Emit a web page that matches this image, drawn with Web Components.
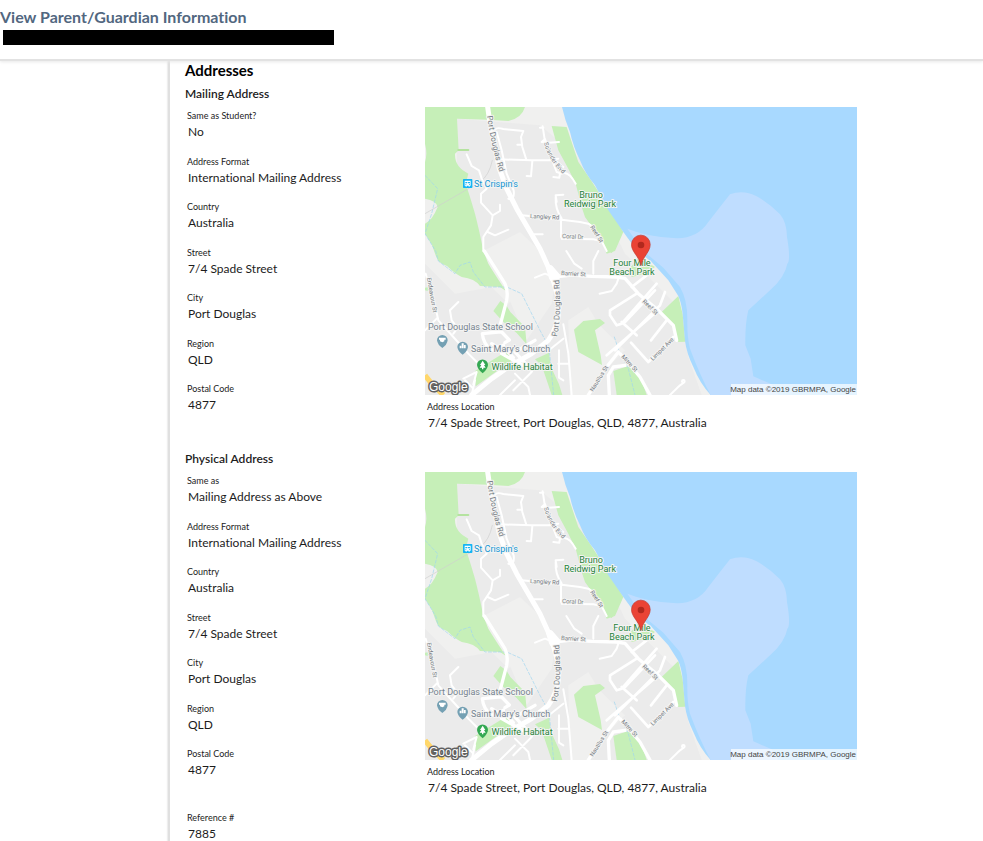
<!DOCTYPE html>
<html lang="en">
<head>
<meta charset="utf-8">
<title>View Parent/Guardian Information</title>
<style>
  html, body { margin: 0; background: #fff; }
  body { font-family: Lato, "Open Sans", sans-serif; font-variant-ligatures: none; color: #1c1c1c; }
</style>
</head>
<body>
<guardian-page></guardian-page>

<template id="map-template">
  <style>
    :host { display: block; }
    svg { display: block; width: 100%; height: auto; }
    text { font-family: Roboto, sans-serif; font-size: 9px; fill: #74838f; paint-order: stroke; stroke: #f4f4f3; stroke-width: 2px; stroke-linejoin: round; }
    .small { font-size: 6px; fill: #737980; }
    .road { font-size: 8px; fill: #737980; }
    .park { fill: #26833a; text-anchor: middle; }
    .bus { fill: #1296d3; }
    .brand { font-family: "Liberation Sans", sans-serif; font-size: 12px; fill: #fff; stroke: #606060; stroke-width: 3px; }
    .credit { font-family: "Liberation Sans", sans-serif; font-size: 8px; fill: #444; stroke: none; text-anchor: end; }
  </style>
  <svg viewBox="0 0 432 288" role="img" aria-label="Map of Port Douglas">
    <g transform="scale(.33333)" fill="none" stroke-linecap="round" stroke-linejoin="round">
      <rect width="1296" height="864" fill="#f0f0ef"/>
      <path fill="#ebebeb" d="M96 35L345 55 460 150 600 440 760 600 790 750 830 864H0V470L90 560 200 540 250 590 305 530 210 440 175 432 96 200z"/>
      <path fill="#f0f0ef" d="M175 432L285 375 345 432 390 520 380 590 305 700 250 570 200 440z"/>
      <path fill="#f0f0ef" d="M430 640L490 600 520 650 600 730 540 790 490 864H435z"/>
      <!-- parkland -->
      <g fill="#c6efb8">
        <path d="M0 0H300Q290 34 250 42L190 38 96 35 101 130 90 140Q88 180 130 200L122 230 135 270 150 320Q163 370 175 432L190 470Q208 500 235 540L243 552 225 540 165 537Q150 515 110 510 90 500 66 477 40 470 33 448L20 412 0 380V350Q22 340 38 300 34 280 0 275V165Q8 140 0 110z"/>
        <path d="M205 612L226 582 245 596 256 615 300 660 305 712 275 678 232 642z"/>
        <path d="M150 792L240 736 267 756 152 838z"/>
        <path d="M330 757L372 737 378 780 402 832 412 864H380L350 775z"/>
        <path d="M0 542L12 540 8 552 0 550z"/>
        <path d="M380 57L425 60 445 120 460 165 495 215 550 300 595 375 570 432 545 440 530 400 480 330 470 300 452 230 430 185 400 130z"/>
        <path d="M613 485L650 442 665 465 690 480 660 500 620 510z"/>
        <path d="M548 432H565L560 438z"/>
        <path d="M710 615L760 567 773 622 781 704 760 705 750 680 735 645z"/>
        <path d="M447 668L475 642 525 636 540 648 510 670 527 744 531 774 460 735z"/>
        <path d="M565 792L600 780 622 778 650 820 665 864H575z"/>
      </g>
      <!-- sea -->
      <path fill="#a8d9ff" d="M411 0Q420 40 435 75 445 120 465 160 480 200 510 235L550 310 595 375 635 430 680 465 730 520 760 567Q770 590 773 622L780 702Q785 740 805 780 825 830 857 864H1296V0z"/>
      <path fill="#bfddff" d="M607 365Q670 390 745 393 815 398 850 345L885 300 915 262Q955 247 995 268 1035 290 1065 322 1085 345 1086 390 1098 460 1087 470 1080 510 1035 550L970 610Q960 650 961 715L977 755 985 808 1040 832 1060 864H857Q825 805 795 725 786 690 787 640 788 580 765 540L715 482 655 432z"/>
      <!-- creeks and boundary -->
      <g stroke="#9fd4f0" stroke-width="2" stroke-dasharray="9 6">
        <path d="M0 205L38 245 20 320 0 380 32 432 40 462 90 500 105 475 135 465 145 495 180 540 245 540 290 560 310 600 345 670 372 720 386 864"/>
        <path d="M568 690L583 735 610 785 630 864"/>
      </g>
      <path stroke="#cfcfcf" stroke-width="2" d="M0 320L165 225Q193 205 202 160"/>
      <!-- streets -->
      <g stroke="#fff" stroke-width="6">
        <path d="M210 68Q215 60 235 66L295 72 288 90 292 120 303 155M277 113H291M223 157L318 160 390 160 415 180M322 162L318 208 305 207M353 58L360 104 350 105 360 96 378 150 395 195 405 198 403 212 385 210M410 200Q430 190 452 230M355 62L345 62M402 105L360 108M400 155L370 160"/>
        <path d="M215 75L230 130 245 200 266 250Q270 280 250 275M125 142L140 177 162 190 170 215 185 245 168 260 168 287 203 325 198 355 175 390 175 432M203 325L225 312 225 293M188 375L210 385 250 368"/>
        <path d="M290 325L345 330 410 338 465 345 490 350 505 360M328 382H353M408 335V390M395 285L392 265 415 263M392 270Q390 305 410 335M410 395L505 397 530 402 545 432"/>
        <path stroke="#b5e3a0" d="M100 129H130"/>
        <path stroke-width="10" d="M178 432L215 490 240 530Q250 550 245 580L220 675 230 675 253 699 240 707M220 675L172 680Q175 712 200 730L235 715M265 752L245 730M230 740L320 790 270 735 330 700M240 735L200 710"/>
        <path d="M2 500L18 560 30 595 40 640 85 690 130 740 155 765M100 585L75 610 80 640 98 663 85 680M0 670L35 635M115 815L155 795 145 832"/>
        <path stroke-width="10" d="M385 510L440 504 500 508 575 510 600 514 640 560 700 610 745 655 755 700"/>
        <path d="M424 432L448 470 470 485M520 432L505 462 505 500M385 510L360 500 330 512M524 560L560 552 575 530 580 515"/>
        <path stroke-width="8" d="M635 560L555 610 555 625 575 655 590 650 695 530M590 645L635 685M570 730L705 595 720 555M545 745L700 610M678 700L725 640M618 707L670 765 745 690M600 645L690 550M620 540L665 505"/>
        <path stroke-width="10" d="M490 864L545 780 580 735M585 740L620 780 645 810 675 864M553 864L550 805 565 780 600 775"/>
        <path d="M402 730V812L415 820M400 770H430M415 652L430 740 440 864M365 735L415 695M735 864L765 835 775 828"/>
        <circle cx="775" cy="823" r="4"/>
        <path d="M270 800L310 840 315 864M150 820L140 864M120 820L145 845M265 850L320 795M270 820L225 864"/>
      </g>
      <g stroke="#fff" stroke-width="15">
        <path d="M188 0L193 35 210 120 223 185 245 245 275 305 345 425 372 485 382 510 400 575Q408 650 370 700L320 740 250 780 200 815 140 864"/>
      </g>
      <path stroke="#fff" stroke-width="22" d="M375 485L395 508 383 512z"/>
      <path stroke="#ffd76b" stroke-width="16" stroke-linecap="butt" d="M0 805L20 830 55 864"/>
      <!-- place symbols -->
      <rect x="114" y="216" width="28" height="27" rx="2" fill="#14b5f4"/>
      <path fill="#fff" d="M119 221H137V236H134V239H131V236H125V239H122V236H119z"/>
      <path fill="#14b5f4" d="M121 225H127V229H121zM129 225H135V229H129zM121 232H124V234H121zM132 232H135V234H132z"/>
      <g fill="#74a0b3">
        <path d="M52 723Q38 714 36 700A16 16 0 1 1 68 700Q66 714 52 723zM113 743Q99 734 97 720A16 16 0 1 1 129 720Q127 734 113 743z"/>
        <path fill="#34a853" d="M173 799Q158 788 156 774A16 16 0 1 1 189 774Q187 788 173 799z"/>
      </g>
      <path fill="#fff" d="M42 692H62V698H58V703L52 706 45 703V698H42zM104 716H109V724H104zM110 709H116V724H110zM117 714H122V724H117zM173 761L181 774H177L182 782H175V787H171V782H164L169 774H165z"/>
    </g>
    <defs>
      <path id="pd-north" d="M62 9Q66 38 76 70"/>
      <path id="pd-south" d="M132 230Q137 205 134 169"/>
      <path id="solander" d="M119 36Q125 57 142 70"/>
    </defs>
    <text class="road"><textPath href="#pd-north">Port Douglas Rd</textPath></text>
    <text class="road"><textPath href="#pd-south">Port Douglas Rd</textPath></text>
    <text class="small"><textPath href="#solander">Solander Blvd</textPath></text>
    <text class="small" x="105" y="111" transform="rotate(3 105 111)">Langley Rd</text>
    <text class="small" x="137" y="131" transform="rotate(3 137 131)">Coral Dr</text>
    <text class="small" x="165" y="120" transform="rotate(58 165 120)">Reef St</text>
    <text class="small" x="136" y="168" transform="rotate(3 136 168)">Barrier St</text>
    <text class="small" x="217" y="195" transform="rotate(44 217 195)">Reef St</text>
    <text class="small" x="228" y="254" transform="rotate(-45 228 254)">Limpet Ave</text>
    <text class="small" x="196" y="250" transform="rotate(47 196 250)">Mitre St</text>
    <text class="small" x="168" y="285" transform="rotate(-58 168 285)">Nautilus St</text>
    <text class="small" x="2" y="171" transform="rotate(80 2 171)">Endeavour St</text>
    <text class="bus" x="49" y="80">St Crispin's</text>
    <text class="park" x="166" y="91">Bruno</text>
    <text class="park" x="165" y="100">Reidwig Park</text>
    <text class="park" x="207" y="159">Four Mile</text>
    <text class="park" x="207" y="168">Beach Park</text>
    <text x="3" y="223">Port Douglas State School</text>
    <text x="46" y="245">Saint Mary's Church</text>
    <text class="park" x="97" y="263">Wildlife Habitat</text>
    <path fill="#ea4335" stroke="#c5372c" stroke-width=".7" d="M216 158.500C214 149 206.500 145 206.500 137.500A9.300 9.300 0 0 1 225.200 137.500C225.200 145 218 149 216 158.500z"/>
    <circle cx="216" cy="138" r="3.300" fill="#b1281d"/>
    <text class="brand" x="4" y="284">Google</text>
    <rect x="306" y="277" width="126" height="11" fill="#fff" opacity=".7"/>
    <text class="credit" x="431" y="285">Map data ©2019 GBRMPA, Google</text>
  </svg>
</template>

<script>
  function attach(host, html) {
    host.attachShadow({ mode: 'open' }).innerHTML = html;
  }

  customElements.define('page-banner', class extends HTMLElement {
    connectedCallback() {
      attach(this, `
        <style>
          :host { display: block; position: relative; background: #fff; border-bottom: 2px solid #e2e2e2; box-shadow: 0 1px 3px #e8e8e8; padding: 8px 0 14px; }
          h1 { margin: 0; font-size: 16px; line-height: 18px; font-weight: 700; color: #52677f; }
          .redacted { margin: 4px 0 0 3px; width: 331px; max-width: 100%; height: 15px; background: #000; }
        </style>
        <h1><slot></slot></h1>
        <div class="redacted"></div>`);
    }
  });

  customElements.define('info-field', class extends HTMLElement {
    connectedCallback() {
      attach(this, `
        <style>
          :host { display: block; }
          .label { font-size: 9px; line-height: 12px; padding-left: 2px; }
          .value { font-size: 12px; line-height: 16px; margin-top: 2px; padding-left: 3px; }
        </style>
        <div class="label">${this.getAttribute('label')}</div>
        <div class="value"><slot></slot></div>`);
    }
  });

  customElements.define('area-map', class extends HTMLElement {
    connectedCallback() {
      this.attachShadow({ mode: 'open' })
        .append(document.getElementById('map-template').content.cloneNode(true));
    }
  });

  customElements.define('address-section', class extends HTMLElement {
    connectedCallback() {
      attach(this, `
        <style>
          :host { display: block; }
          h3 { margin: 0; font-size: 12px; line-height: 16px; font-weight: 600; }
          .columns { display: grid; grid-template-columns: 240px minmax(0, 432px); margin-top: 5px; }
          .fields { display: flex; flex-direction: column; justify-content: space-between; padding: 3px 0 18px; }
          area-map { margin-bottom: 6px; }
        </style>
        <h3>${this.getAttribute('heading')}</h3>
        <div class="columns">
          <div class="fields"><slot></slot></div>
          <div class="place">
            <area-map></area-map>
            <info-field label="Address Location">7/4 Spade Street, Port Douglas, QLD, 4877, Australia</info-field>
          </div>
        </div>`);
    }
  });

  customElements.define('guardian-page', class extends HTMLElement {
    connectedCallback() {
      const shared = `
        <info-field label="Address Format">International Mailing Address</info-field>
        <info-field label="Country">Australia</info-field>
        <info-field label="Street">7/4 Spade Street</info-field>
        <info-field label="City">Port Douglas</info-field>
        <info-field label="Region">QLD</info-field>
        <info-field label="Postal Code">4877</info-field>`;
      attach(this, `
        <style>
          :host { display: flex; flex-direction: column; min-height: 100vh; }
          .body { display: grid; grid-template-columns: 168px 1fr; flex: 1; }
          main { border-left: 2px solid #e0e0e0; box-shadow: -1px 0 1px #eee; padding-left: 15px; }
          h2 { margin: 0; font-size: 15px; line-height: 18px; font-weight: 700; color: #000; }
          .first { margin-top: 7px; }
          .second { margin-top: 20px; }
          .extra { margin-top: 16px; }
        </style>
        <page-banner>View Parent/Guardian Information</page-banner>
        <div class="body">
          <aside></aside>
          <main>
            <h2>Addresses</h2>
            <address-section class="first" heading="Mailing Address">
              <info-field label="Same as Student?">No</info-field>${shared}
            </address-section>
            <address-section class="second" heading="Physical Address">
              <info-field label="Same as">Mailing Address as Above</info-field>${shared}
            </address-section>
            <info-field class="extra" label="Reference #">7885</info-field>
          </main>
        </div>`);
    }
  });
</script>
</body>
</html>
